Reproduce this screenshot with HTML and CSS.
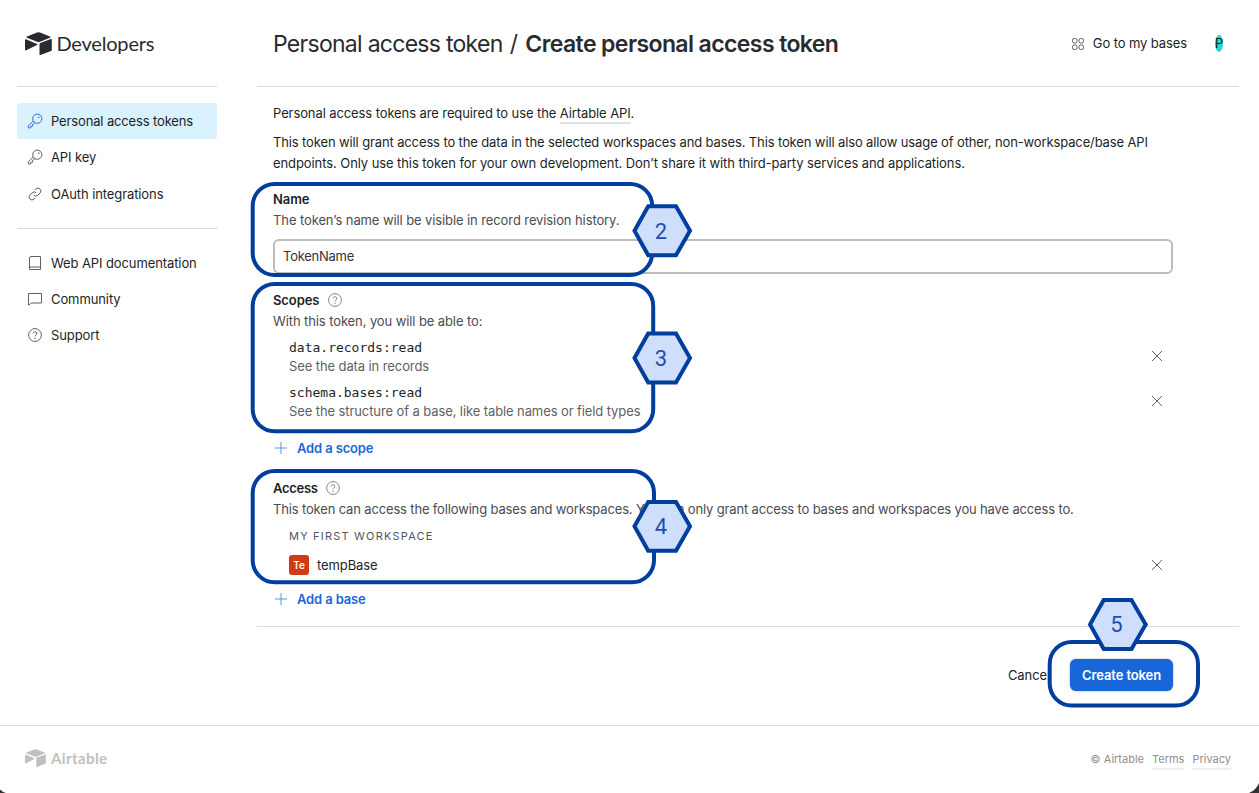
FILE: index.html
```html
<!DOCTYPE html>
<html lang="en">
<head>
<meta charset="utf-8">
<title>Create personal access token</title>
<link rel="stylesheet" href="styles.css">
</head>
<body>
<svg class="defs" width="0" height="0">
  <symbol id="mark" viewBox="0 0 27 23"><path d="M12 .5q1.500-.6 3 0l10 4q1.300.6 0 1.200l-10 4q-1.500.6-3 0l-10-4q-1.300-.6 0-1.200z"/><path d="M14.500 12.200q0-.9.800-1.200l10.500-4q1-.3 1 .6v10.300q0 .8-.8 1.100l-10.600 4q-.9.300-.9-.6z"/><path d="M0 8q0-1.200 1-.7l11 4.600q.8.500 0 1L1.300 18.200q-1.300.6-1.300-.6z"/></symbol>
  <symbol id="key" viewBox="0 0 16 16"><circle cx="10.300" cy="5.700" r="4.600"/><path d="M6.200 8 1.300 12.900v2h2.500v-1.700h1.700v-1.700l2.400-1.800"/><circle class="dot" cx="11.800" cy="4.300" r=".8"/></symbol>
  <symbol id="help" viewBox="0 0 16 16"><circle cx="8" cy="8" r="6.400"/><path d="M6.200 6.500a1.800 1.800 0 1 1 2.600 1.600q-.8.400-.8 1.300"/><circle class="dot" cx="8" cy="11.300" r=".7"/></symbol>
  <symbol id="close" viewBox="0 0 12 12"><path d="m1 1 10 10M11 1 1 11"/></symbol>
  <symbol id="plus" viewBox="0 0 14 14"><path d="M7 1v12M1 7h12"/></symbol>
</svg>
<div class="page">
  <div class="columns">
    <aside class="sidebar">
      <div class="brand"><svg class="brand-mark"><use href="#mark"/></svg><span class="brand-name">Developers</span></div>
      <nav class="nav">
        <a class="nav-item active"><svg class="icon"><use href="#key"/></svg><span>Personal access tokens</span></a>
        <a class="nav-item"><svg class="icon"><use href="#key"/></svg><span>API key</span></a>
        <a class="nav-item oauth"><svg class="icon" viewBox="0 0 16 16"><path d="M6.800 9.200a2.900 2.900 0 0 0 4.100 0l2.200-2.200A2.900 2.900 0 0 0 9 2.900L7.900 4M9.200 6.800a2.900 2.900 0 0 0-4.100 0L2.900 9A2.900 2.900 0 0 0 7 13.100L8.100 12"/></svg><span>OAuth integrations</span></a>
      </nav>
      <nav class="nav nav-more">
        <a class="nav-item"><svg class="icon" viewBox="0 0 16 16"><path d="M2.500 13.500V3q0-1.500 1.500-1.500h9.500v10.500H4q-1.500 0-1.500 1.500v1h11v-2.500"/></svg><span>Web API documentation</span></a>
        <a class="nav-item"><svg class="icon" viewBox="0 0 16 16"><path d="M1.500 2.500h13v9.500H4.200l-2.200 2.200-.5-.2z"/></svg><span>Community</span></a>
        <a class="nav-item"><svg class="icon"><use href="#help"/></svg><span>Support</span></a>
      </nav>
    </aside>
    <main class="main">
      <header class="header">
        <h1 class="title"><span class="crumb">Personal access token</span><span class="slash">/</span><span class="current">Create personal access token</span></h1>
        <div class="account"><svg class="bases" viewBox="0 0 14 14"><rect x="1.500" y="1.500" width="4.500" height="4.500" rx="1.600"/><rect x="8" y="1.500" width="4.500" height="4.500" rx="1.600"/><rect x="1.500" y="8" width="4.500" height="4.500" rx="1.600"/><rect x="8" y="8" width="4.500" height="4.500" rx="1.600"/></svg><span class="go">Go to my bases</span><span class="avatar">P</span></div>
      </header>
      <section class="form">
        <p class="intro">Personal access tokens are required to use the <a class="api-link">Airtable API</a>.</p>
        <p class="about"><span class="about-grant">This token will grant access to the data in the selected workspaces and bases. This token will also allow usage of other, non-workspace/base API</span><br><span class="about-use">endpoints. Only use this token for your own development. Don’t share it with third-party services and applications.</span></p>
        <h2 class="label name-label">Name</h2>
        <p class="hint">The token’s name will be visible in record revision history.</p>
        <div class="input">TokenName</div>
        <h2 class="label scopes-label">Scopes<svg class="icon help"><use href="#help"/></svg></h2>
        <p class="hint">With this token, you will be able to:</p>
        <div class="scope"><div><code>data.records:read</code><p>See the data in records</p></div><svg class="close"><use href="#close"/></svg></div>
        <div class="scope"><div><code>schema.bases:read</code><p>See the structure of a base, like table names or field types</p></div><svg class="close"><use href="#close"/></svg></div>
        <a class="add add-scope"><svg class="plus"><use href="#plus"/></svg><span>Add a scope</span></a>
        <h2 class="label access-label">Access<svg class="icon help"><use href="#help"/></svg></h2>
        <p class="hint access-hint">This token can access the following bases and workspaces. You can only grant access to bases and workspaces you have access to.</p>
        <h3 class="workspace">MY FIRST WORKSPACE</h3>
        <div class="base"><span class="base-icon">Te</span><span class="base-name">tempBase</span><svg class="close"><use href="#close"/></svg></div>
        <a class="add add-base"><svg class="plus"><use href="#plus"/></svg><span>Add a base</span></a>
      </section>
      <div class="actions"><a class="cancel">Cancel</a><button class="create">Create token</button></div>
    </main>
  </div>
  <footer class="footer">
    <div class="footer-brand"><svg class="footer-mark"><use href="#mark"/></svg><span class="footer-name">Airtable</span></div>
    <div class="legal"><span>© Airtable</span><a>Terms</a><a>Privacy</a></div>
  </footer>
  <svg class="callouts" viewBox="0 0 1259 793">
    <g class="frame">
      <rect x="252.700" y="184" width="399.500" height="91" rx="22"/>
      <rect x="252.700" y="284" width="400.500" height="147.300" rx="22"/>
      <rect x="252.700" y="471" width="401.300" height="111.300" rx="22"/>
      <rect x="1049.700" y="642" width="148.300" height="63.500" rx="22"/>
    </g>
    <g class="hex">
      <path d="M634.500 230.700 648.200 206.300H676L690 230.700 676 255.200H648.200z"/>
      <path d="M634.500 358 648.200 333.600H676L690 358 676 382.500H648.200z"/>
      <path d="M634.500 526.300 648.200 501.900H676L690 526.300 676 550.800H648.200z"/>
      <path d="M1090 624.500 1103.700 600.100H1131.500L1145.700 624.500 1131.500 649H1103.700z"/>
    </g>
    <g class="num"><text x="661" y="238.700">2</text><text x="661" y="366">3</text><text x="661" y="534">4</text><text x="1116.500" y="632.300">5</text></g>
    <path class="corner" d="M0 789.500Q2.500 792 6 793H0zM1259 783Q1256 790.500 1249 793H1259z"/>
  </svg>
</div>
</body>
</html>
```
FILE: styles.css
```css
* { box-sizing: border-box; }
body { margin: 0; background: #fff; color: #1d1f25; font: 13px/21px Inter, "Liberation Sans", sans-serif; letter-spacing: -.1px; }
h1, h2, h3, p { margin: 0; font-weight: 400; font-size: 13px; }
.defs { display: block; position: absolute; }
.page { position: relative; width: 1259px; height: 793px; overflow: hidden; display: flex; flex-direction: column; }
.columns { display: flex; gap: 40px; padding: 0 20px 0 17px; height: 725px; }
svg { fill: none; stroke: #606166; flex: none; }
span, a, code { white-space: pre; }
.dot { fill: #606166; stroke: none; }

.sidebar { width: 200px; }
.brand { height: 87px; border-bottom: 1px solid #dcdcdc; padding: 0 0 0 8px; display: flex; align-items: center; gap: 4.500px; }
.brand-mark { width: 27px; height: 23px; fill: #2a2b2e; stroke: none; }
.brand-name { font: 400 20px/26px Lato, sans-serif; letter-spacing: -.2px; color: #2a2b2e; padding-bottom: 1px; }
.nav { display: flex; flex-direction: column; padding-top: 16px; }
.nav-item { height: 36px; display: flex; align-items: center; gap: 8px; padding-left: 10px; border-radius: 3px; }
.nav-item.oauth { margin-top: 1px; }
.nav-item.active { background: #d9f2fd; letter-spacing: -.14px; }
.nav-item.active svg { stroke: #2d6fe0; }
.icon { width: 16px; height: 16px; }
.nav-more { margin-top: 16px; border-top: 1px solid #dcdcdc; padding-top: 16px; }

.main { width: 982px; }
.header { height: 87px; border-bottom: 1px solid #dcdcdc; padding: 1px 16px 0 16px; display: flex; align-items: center; justify-content: space-between; }
.title { font-size: 23px; line-height: 30px; display: flex; color: #2a2b2e; }
.crumb { letter-spacing: -.72px; }
.slash { margin: 0 7.300px; }
.current { font-weight: 600; letter-spacing: -.59px; }
.account { display: flex; align-items: center; }
.bases { width: 14px; height: 14px; margin-right: 8px; }
.avatar { margin-left: 28px; width: 8px; height: 17px; border-radius: 50%; background: #20d9d2; display: flex; justify-content: center; line-height: 16px; font-size: 13px; }

.form { height: 539px; padding: 16px 66px 0 16px; }
.intro { letter-spacing: -.1px; }
.api-link { border-bottom: 2px solid #e2e2e2; padding-bottom: 1px; }
.about { margin-top: 8px; }
.about-grant { letter-spacing: -.126px; }
.about-use { letter-spacing: -.084px; }
.label { font-weight: 600; display: flex; align-items: center; height: 21px; }
.name-label { margin-top: 15px; }
.hint { color: #4b4c50; white-space: nowrap; }
.access-hint { letter-spacing: -.156px; }
.input { margin-top: 8px; width: 900px; height: 35px; border: 2px solid #bdbdbd; border-radius: 6px; padding: 0 8px; line-height: 31px; color: #333; letter-spacing: -.25px; }
.scopes-label { margin-top: 16px; }
.help { margin: -1px 0 0 8px; opacity: .75; }
.scope { height: 45px; padding: 6px 10px 0 16px; display: flex; justify-content: space-between; color: #5e5f63; }
.scope code { display: block; font: 13px/20px "DejaVu Sans Mono", monospace; letter-spacing: 0; color: #1d1f25; }
.scope p { line-height: 17px; }
.scope .close { margin-top: 11.600px; }
.close { width: 12px; height: 12px; }
.add { display: flex; align-items: center; height: 21px; gap: 9px; padding-left: 1px; color: #1a66da; font-weight: 600; letter-spacing: -.14px; }
.plus { width: 14px; height: 14px; stroke: #5a94e8; margin-top: -1px; }
.add-scope { margin-top: 16px; }
.access-label { margin-top: 19px; letter-spacing: -.3px; }
.access-label .help { margin-left: 7.300px; }
.workspace { margin-top: 6px; padding-left: 16px; font-size: 11px; color: #55565a; letter-spacing: 1.200px; }
.base { display: flex; align-items: center; height: 22px; margin-top: 7px; padding: 0 10px 0 16px; }
.base .close { margin-left: auto; }
.base-icon { width: 20px; height: 20px; border-radius: 3px; background: #d03b16; color: #fff; text-align: center; font-size: 10px; line-height: 20px; font-weight: 600; }
.base-name { margin-left: 8px; }
.add-base { margin-top: 13px; }
.actions { border-top: 1px solid #dcdcdc; height: 99px; padding: 32px 66px 0 0; display: flex; justify-content: flex-end; gap: 20px; }
.cancel { line-height: 33px; }
.create { width: 103px; height: 32px; border: 0; border-radius: 6px; padding: 0; background: #1766da; color: #fff; font: 600 13px/32px Inter, sans-serif; letter-spacing: -.1px; box-shadow: 0 0 2px rgba(0,0,0,.4); }

.footer { flex: 1; border-top: 1px solid #dcdcdc; padding: 0 28px 0 25px; display: flex; justify-content: space-between; }
.footer-brand { display: flex; align-items: center; gap: 5px; height: 64px; }
.footer-mark { width: 21px; height: 18px; fill: #c0c0c0; stroke: none; }
.footer-name { font: 700 15px/20px Lato, sans-serif; letter-spacing: .4px; color: #c0c0c0; }
.legal { display: flex; gap: 8px; padding-top: 25px; font-size: 11px; line-height: 16px; color: #8f8f8f; letter-spacing: 0; }
.legal a { border-bottom: 2px solid #efefef; height: 19px; }

.callouts { position: absolute; left: 0; top: 0; width: 1259px; height: 793px; pointer-events: none; }
.frame, .hex { stroke: #013e9e; stroke-width: 4; }
.hex path { fill: #cfdffb; }
.num { font: 22px Roboto, sans-serif; fill: #1d4fae; stroke: none; text-anchor: middle; }
.corner { fill: #333; stroke: none; }
```
